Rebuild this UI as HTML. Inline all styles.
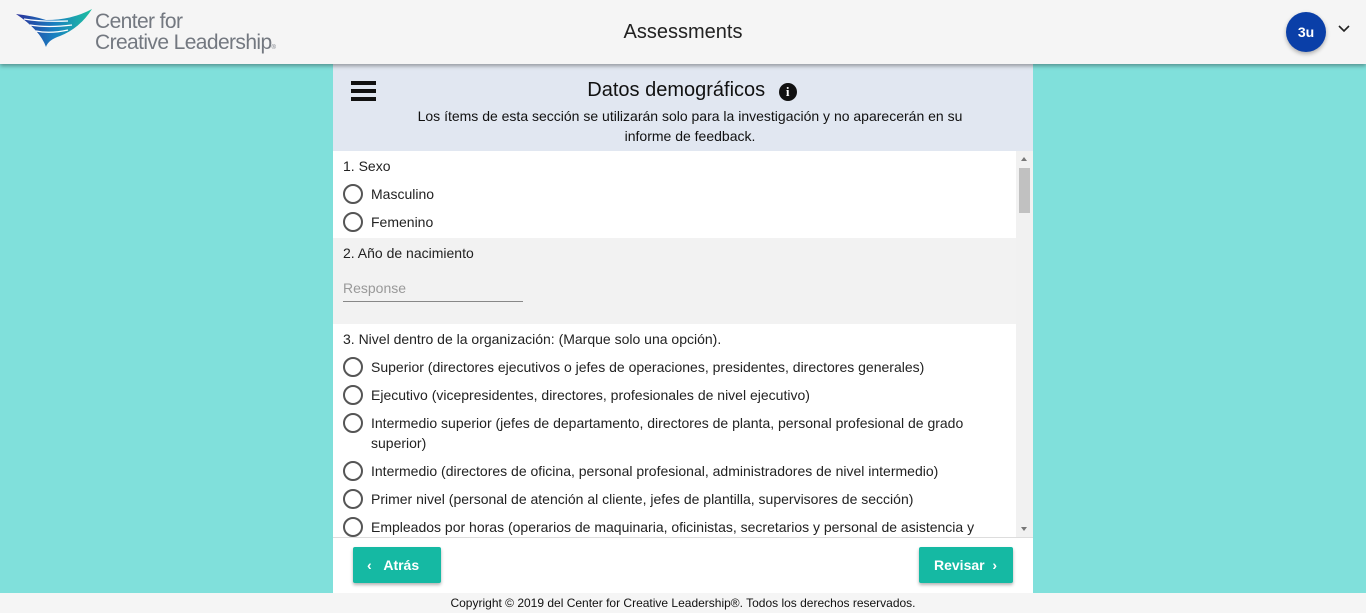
<!DOCTYPE html>
<html><head><meta charset="utf-8"><style>
*{margin:0;padding:0;box-sizing:border-box}
body{width:1366px;height:613px;overflow:hidden;background:#80e0db;font-family:"Liberation Sans",Arial,sans-serif;color:#222;position:relative}
.top{position:absolute;left:0;top:0;width:1366px;height:64px;background:#f5f5f5;box-shadow:0 2px 4px rgba(0,0,0,.35);z-index:2}
.title{position:absolute;left:0;width:1366px;top:21px;text-align:center;font-size:20px;color:#222}
.logo{position:absolute;left:14px;top:8px}
.lt{position:absolute;left:95px;top:11px;font-size:21px;line-height:21px;color:#737880;letter-spacing:-0.6px}
.av{position:absolute;left:1286px;top:12px;width:40px;height:40px;border-radius:50%;background:#0a3fa8;color:#fff;font-weight:bold;font-size:14px;text-align:center;line-height:40px;box-shadow:0 2px 4px rgba(0,0,0,.3)}
.panel{position:absolute;left:333px;top:64px;width:700px;height:529px;background:#fff}
.ph{height:87px;background:#e1e7f1;position:relative;text-align:center}
.ph h1{font-weight:normal;font-size:20px;padding-top:15px;color:#111;padding-left:18px}
.ph p{font-size:14px;line-height:20px;width:560px;margin:4px auto 0;color:#111;padding-left:14px}
.burger{position:absolute;left:18px;top:17px;width:25px}
.burger i{display:block;height:4px;background:#111;margin-bottom:4px}
.body{position:absolute;top:87px;left:0;width:683px;height:386px;overflow:hidden;font-size:14px}
.sb{position:absolute;left:683px;top:87px;width:17px;height:386px;background:#f1f1f1}
.q{padding:7px 10px}
.q .lab{margin-bottom:10px}
.opt{display:flex;align-items:flex-start;margin-bottom:8px;line-height:20px}
.rd{width:20px;height:20px;border:2px solid #555;border-radius:50%;margin-right:8px;flex:none}
.btn{position:absolute;top:483px;height:36px;background:#15b9a3;color:#fff;font-weight:bold;font-size:14px;line-height:36px;border-radius:2px;box-shadow:0 2px 3px rgba(0,0,0,.3)}
.foot{position:absolute;left:0;top:593px;width:1366px;height:20px;background:#f5f5f5;font-size:12px;text-align:center;line-height:20px;color:#111}
</style></head><body>
<div class="top">
<svg class="logo" width="80" height="42" viewBox="0 0 80 42"><defs><linearGradient id="g" x1="0" x2="1"><stop offset="0" stop-color="#2a2f9a"/><stop offset=".5" stop-color="#1a7fc0"/><stop offset="1" stop-color="#1ec0a0"/></linearGradient></defs>
<path d="M2 6 Q20 8 32 12 Q58 12 78 1 Q66 20 46 28 Q34 32 32 39 Q26 22 2 6Z" fill="url(#g)"/>
<path d="M10 11 Q28 14 54 13 M16 17 Q34 20 58 17 M22 23 Q36 26 54 22" stroke="#fff" stroke-width="1.2" fill="none"/></svg>
<div class="lt">Center for<br>Creative Leadership<span style="font-size:6px">®</span></div>
<div class="title">Assessments</div>
<div class="av">3u</div>
<svg style="position:absolute;left:1338px;top:25px" width="12" height="8" viewBox="0 0 12 8"><path d="M1 1l5 5 5-5" stroke="#222" stroke-width="1.6" fill="none"/></svg>
</div>
<div class="panel">
<div class="ph"><div class="burger"><i></i><i></i><i></i></div>
<h1>Datos demográficos <span style="display:inline-block;width:18px;height:18px;border-radius:50%;background:#111;color:#fff;font-size:13px;line-height:18px;font-weight:bold;font-family:'Liberation Serif',serif;vertical-align:0px;margin-left:8px">i</span></h1>
<p>Los ítems de esta sección se utilizarán solo para la investigación y no aparecerán en su informe de feedback.</p></div>
<div class="body">
<div class="q" style="height:87px"><div class="lab">1. Sexo</div>
<div class="opt"><span class="rd"></span>Masculino</div><div class="opt"><span class="rd"></span>Femenino</div></div>
<div class="q" style="height:86px;background:#f2f2f2;padding-top:7px"><div class="lab">2. Año de nacimiento</div>
<div style="margin-top:19px;width:180px;border-bottom:1px solid #888;color:#999;padding-bottom:5px">Response</div></div>
<div class="q"><div class="lab">3. Nivel dentro de la organización: (Marque solo una opción).</div>
<div class="opt"><span class="rd"></span>Superior (directores ejecutivos o jefes de operaciones, presidentes, directores generales)</div>
<div class="opt"><span class="rd"></span>Ejecutivo (vicepresidentes, directores, profesionales de nivel ejecutivo)</div>
<div class="opt"><span class="rd"></span>Intermedio superior (jefes de departamento, directores de planta, personal profesional de grado superior)</div>
<div class="opt"><span class="rd"></span>Intermedio (directores de oficina, personal profesional, administradores de nivel intermedio)</div>
<div class="opt"><span class="rd"></span>Primer nivel (personal de atención al cliente, jefes de plantilla, supervisores de sección)</div>
<div class="opt"><span class="rd"></span>Empleados por horas (operarios de maquinaria, oficinistas, secretarios y personal de asistencia y</div>
</div></div>
<div class="sb"><div style="position:absolute;left:3px;top:17px;width:11px;height:45px;background:#c1c1c1"></div>
<div style="position:absolute;left:5px;top:6px;border:3.5px solid transparent;border-bottom:4px solid #777;border-top:0"></div>
<div style="position:absolute;left:5px;bottom:6px;border:3.5px solid transparent;border-top:4px solid #777;border-bottom:0"></div></div>
<div style="position:absolute;top:473px;left:0;width:700px;border-top:1px solid #ddd"></div>
<div class="btn" style="left:20px;width:88px;padding-left:14px">‹ &nbsp;&nbsp;Atrás</div>
<div class="btn" style="left:586px;width:94px;padding-left:15px">Revisar &nbsp;›</div>
</div>
<div class="foot">Copyright © 2019 del Center for Creative Leadership®. Todos los derechos reservados.</div>
</body></html>
